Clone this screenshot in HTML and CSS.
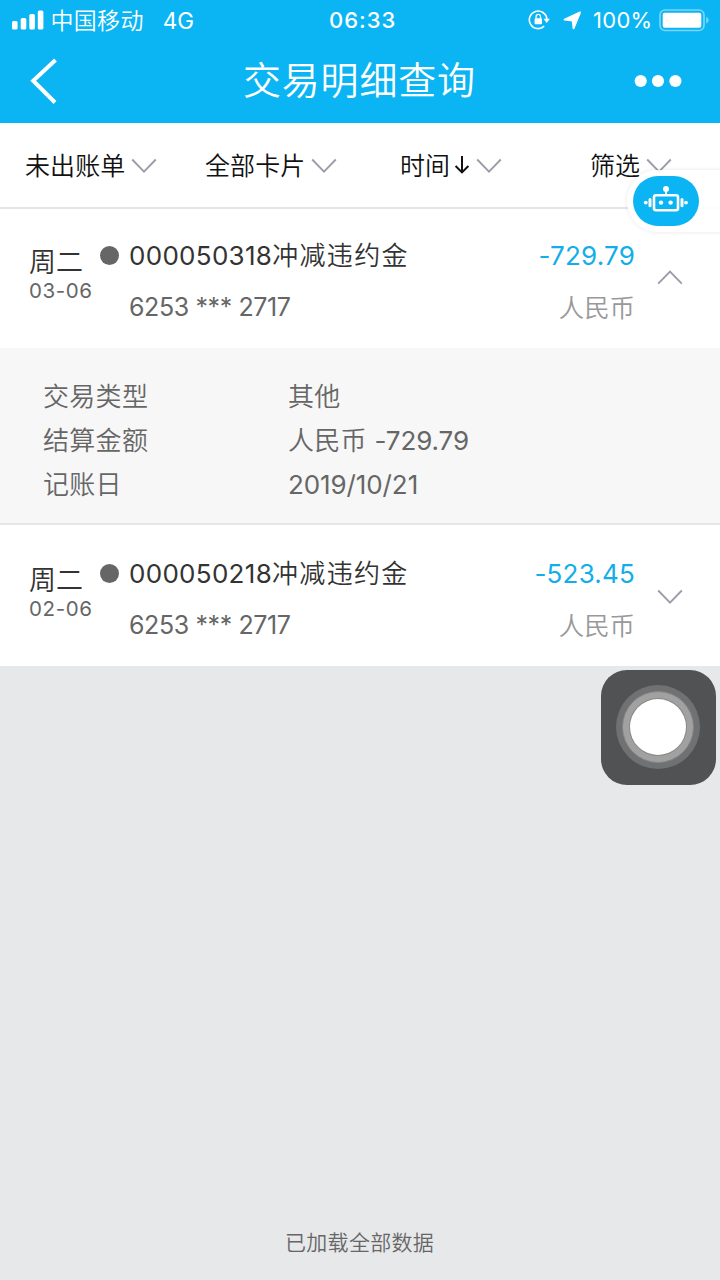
FILE: index.html
```html
<!DOCTYPE html>
<html lang="zh-CN">
<head>
<meta charset="utf-8">
<title>交易明细查询</title>
<link rel="stylesheet" href="styles.css">
</head>
<body>
<div class="screen">
  <header class="header">
    <div class="status">
      <div class="status-left">
        <svg class="signal" width="32" height="20" viewBox="0 0 32 20" fill="#fff"><rect x="0" y="11" width="5.6" height="8.5" rx="1.6"/><rect x="8.7" y="8" width="5.6" height="11.5" rx="1.6"/><rect x="17.3" y="4" width="5.6" height="15.5" rx="1.6"/><rect x="25.8" y="0.5" width="5.6" height="19" rx="1.6"/></svg>
        <span class="carrier">中国移动</span>
        <span class="network">4G</span>
      </div>
      <time class="clock">06:33</time>
      <div class="status-right">
        <svg class="lock" width="22" height="20" viewBox="0 0 22 20" fill="none" stroke="#fff"><path d="M16.2 16.2A8.8 8.8 0 1 1 18.9 9" stroke-width="1.6"/><path d="M15.6 8.8h6.3l-3.2 4.2z" fill="#fff" stroke="none"/><rect x="6.6" y="8.2" width="7.4" height="6" rx="0.8" fill="#fff" stroke="none"/><path d="M8.1 8.4V6.5a2.2 2.2 0 0 1 4.4 0v1.9" stroke-width="1.3"/></svg>
        <svg class="locate" width="19" height="19" viewBox="0 0 19 19"><path d="M17 1.4 1.6 8.6 9.7 9.5 10.6 17.2z" fill="#fff" stroke="#fff" stroke-width="2" stroke-linejoin="round"/></svg>
        <span class="percent">100%</span>
        <svg class="battery" width="51" height="23" viewBox="0 0 51 23"><rect x="1" y="1" width="44" height="20.5" rx="5" fill="none" stroke="#7bd6f8" stroke-width="1.6"/><rect x="3.7" y="3.8" width="38.6" height="15" rx="2" fill="#fff"/><path d="M47.2 7.8q2.4 1.2 2.4 3.5t-2.4 3.5z" fill="#7bd6f8"/></svg>
      </div>
    </div>
    <nav class="titlebar">
      <svg class="back" width="28" height="46" viewBox="0 0 28 46"><path d="M25.5 2 3.2 22.7 25 44.5" fill="none" stroke="#fff" stroke-width="4"/></svg>
      <h1 class="title">交易明细查询</h1>
      <svg class="more" width="48" height="14" viewBox="0 0 48 14" fill="#fff"><circle cx="6.7" cy="7" r="6.1"/><circle cx="24" cy="7" r="6.1"/><circle cx="41.4" cy="7" r="6.1"/></svg>
    </nav>
  </header>

  <div class="filters">
    <div class="filter"><span class="label">未出账单</span><svg class="chevron" width="26" height="16" viewBox="0 0 26 16"><path d="M1.2 1.5 13 13.6 24.8 1.5"/></svg></div>
    <div class="filter"><span class="label">全部卡片</span><svg class="chevron" width="26" height="16" viewBox="0 0 26 16"><path d="M1.2 1.5 13 13.6 24.8 1.5"/></svg></div>
    <div class="filter"><span class="label">时间</span><svg class="sort" width="16" height="20" viewBox="0 0 16 20"><path d="M8 1v16M1.6 11 8 17.4l6.4-6.4"/></svg><svg class="chevron" width="26" height="16" viewBox="0 0 26 16"><path d="M1.2 1.5 13 13.6 24.8 1.5"/></svg></div>
    <div class="filter"><span class="label">筛选</span><svg class="chevron" width="26" height="16" viewBox="0 0 26 16"><path d="M1.2 1.5 13 13.6 24.8 1.5"/></svg></div>
  </div>

  <section class="record">
    <div class="date"><div class="weekday">周二</div><div class="day">03-06</div></div>
    <i class="dot"></i>
    <div class="info"><div class="name"><span class="num">000050318</span>冲减违约金</div><div class="card">6253 *** 2717</div></div>
    <div class="money"><div class="amount">-729.79</div><div class="currency">人民币</div></div>
    <svg class="chevron toggle" width="26" height="16" viewBox="0 0 26 16"><path d="M1.2 13.6 13 1.5 24.8 13.6"/></svg>
  </section>

  <dl class="details">
    <dt>交易类型</dt><dd>其他</dd>
    <dt>结算金额</dt><dd>人民币 <span class="detail-num">-729.79</span></dd>
    <dt>记账日</dt><dd class="detail-num">2019/10/21</dd>
  </dl>

  <section class="record second">
    <div class="date"><div class="weekday">周二</div><div class="day">02-06</div></div>
    <i class="dot"></i>
    <div class="info"><div class="name"><span class="num">000050218</span>冲减违约金</div><div class="card">6253 *** 2717</div></div>
    <div class="money"><div class="amount">-523.45</div><div class="currency">人民币</div></div>
    <svg class="chevron toggle" width="26" height="16" viewBox="0 0 26 16"><path d="M1.2 1.5 13 13.6 24.8 1.5"/></svg>
  </section>

  <footer class="footer">已加载全部数据</footer>

  <div class="assistant">
    <div class="robot">
      <svg width="46" height="28" viewBox="0 0 46 28" fill="none" stroke="#fff"><rect x="11" y="10.2" width="24" height="15" rx="2" stroke-width="2.6"/><path d="M23 4v6" stroke-width="1.8"/><circle cx="23" cy="4" r="3" fill="#fff" stroke="none"/><circle cx="18" cy="17.6" r="2.2" fill="#fff" stroke="none"/><circle cx="27.6" cy="17.6" r="2.2" fill="#fff" stroke="none"/><path d="M7 14.6v6.2M39 14.6v6.2" stroke-width="3" stroke-linecap="round"/><circle cx="2.8" cy="17.6" r="1.9" fill="#fff" stroke="none"/><circle cx="43" cy="17.6" r="1.9" fill="#fff" stroke="none"/></svg>
    </div>
  </div>
  <div class="touch"><div class="ring-outer"><div class="ring-mid"><div class="ring-core"></div></div></div></div>
</div>
</body>
</html>
```

FILE: styles.css
```css
* { box-sizing: border-box; }
body { margin: 0; }
svg { display: block; flex: none; }
.screen {
  position: relative;
  width: 720px;
  height: 1280px;
  overflow: hidden;
  display: flex;
  flex-direction: column;
  background: #e7e8ea;
  font-family: Inter, "Noto Sans CJK SC", sans-serif;
  font-weight: 350;
  color: #333;
  white-space: nowrap;
}
.network, .percent, .day, .num, .card, .amount, .detail-num { font-weight: 400; }
.header { height: 123px; flex: none; background: #0bb5f3; color: #fff; }
.status { height: 40px; display: grid; grid-template-columns: 329px 1fr 192px; align-items: center; }
.status-left { display: flex; align-items: center; padding-left: 12px; }
.carrier { margin-left: 6.5px; padding-top: 2px; font-size: 23px; letter-spacing: .3px; line-height: 38px; }
.network { margin-left: 19px; font-size: 22.5px; }
.clock { font-size: 22px; font-weight: 500; letter-spacing: 1px; }
.status-right { display: flex; align-items: center; }
.locate { margin-left: 13px; }
.percent { margin-left: 11px; font-size: 22px; letter-spacing: .3px; width: 65.5px; }
.titlebar { height: 83px; display: flex; align-items: center; padding: 0 38px 4px 30px; }
.title { margin: 0 0 0 185px; width: 240px; font-size: 38px; font-weight: 350; letter-spacing: .8px; line-height: 50px; }
.back { margin-top: 2px; }
.more { margin-left: auto; margin-top: 2px; }

.filters { height: 86px; flex: none; display: grid; grid-template-columns: 180px 195px 190px 1fr; padding-left: 25px; background: #fff; border-bottom: 2px solid #e4e5e8; font-size: 25px; line-height: 82px; color: #111; }
.filter { display: flex; align-items: center; }
.label { padding-top: 2px; letter-spacing: .1px; }
.chevron { fill: none; stroke: #9b9da8; stroke-width: 1.9; }
.filter .chevron { margin-left: 5.5px; margin-top: 2px; }
.sort { margin-left: 4px; fill: none; stroke: #111; stroke-width: 2; }

.record { height: 139px; flex: none; display: grid; grid-template-columns: 71px 29px 310px 1fr 85px; padding-left: 29px; background: #fff; }
.weekday { margin-top: 34px; font-size: 27px; line-height: 40px; }
.day { margin-top: -2px; font-size: 20.5px; line-height: 20px; letter-spacing: .6px; color: #666; }
.dot { width: 19px; height: 19px; margin-top: 37px; border-radius: 50%; background: #666; }
.name { margin-top: 27px; font-size: 26px; line-height: 40px; letter-spacing: 1.3px; }
.num { letter-spacing: .3px; }
.card { margin-top: 13px; font-size: 25px; line-height: 36px; letter-spacing: -.4px; color: #666; }
.money { text-align: right; }
.amount { margin-top: 27px; font-size: 26px; line-height: 40px; letter-spacing: .2px; color: #13aee9; }
.currency { margin-top: 14px; font-size: 25.4px; line-height: 36px; color: #999; }
.toggle { margin: 61px 0 0 22px; }
.second { height: 141px; padding-top: 2px; }
.second .toggle { margin-top: 62px; }

.details { margin: 0; height: 177px; flex: none; display: grid; grid-template-columns: 245px 1fr; grid-auto-rows: 44px; align-content: start; padding: 26.5px 0 0 43px; background: #f7f7f7; border-bottom: 2px solid #e6e6e6; font-size: 26px; line-height: 44px; letter-spacing: .3px; color: #666; }
.details dd { margin: 0; }
.detail-num { letter-spacing: -.1px; }
.footer { margin-top: auto; height: 57px; padding-left: 285px; font-size: 21px; line-height: 40px; letter-spacing: .3px; color: #666; }

.assistant { position: absolute; left: 627px; top: 170px; width: 110px; height: 62px; padding: 6px; border-radius: 31px 0 0 31px; background: rgba(255,255,255,.9); box-shadow: 0 0 4px rgba(0,0,0,.1); }
.robot { width: 66px; height: 50px; display: flex; align-items: center; justify-content: center; border-radius: 25px; background: #0bb5f3; }
.robot svg { margin-top: -5px; }
.touch { position: absolute; left: 601px; top: 670px; width: 115px; height: 115px; display: flex; align-items: center; justify-content: center; padding: 0 1px 1px 0; border-radius: 26px; background: #515254; }
.ring-outer { width: 84px; height: 84px; padding: 6px; border-radius: 50%; background: #707173; }
.ring-mid { width: 72px; height: 72px; padding: 7px; border: 1px solid #858585; border-radius: 50%; background: #a1a1a2; }
.ring-core { width: 56px; height: 56px; border-radius: 50%; background: #fff; box-shadow: 0 0 0 1px #888; }
```
